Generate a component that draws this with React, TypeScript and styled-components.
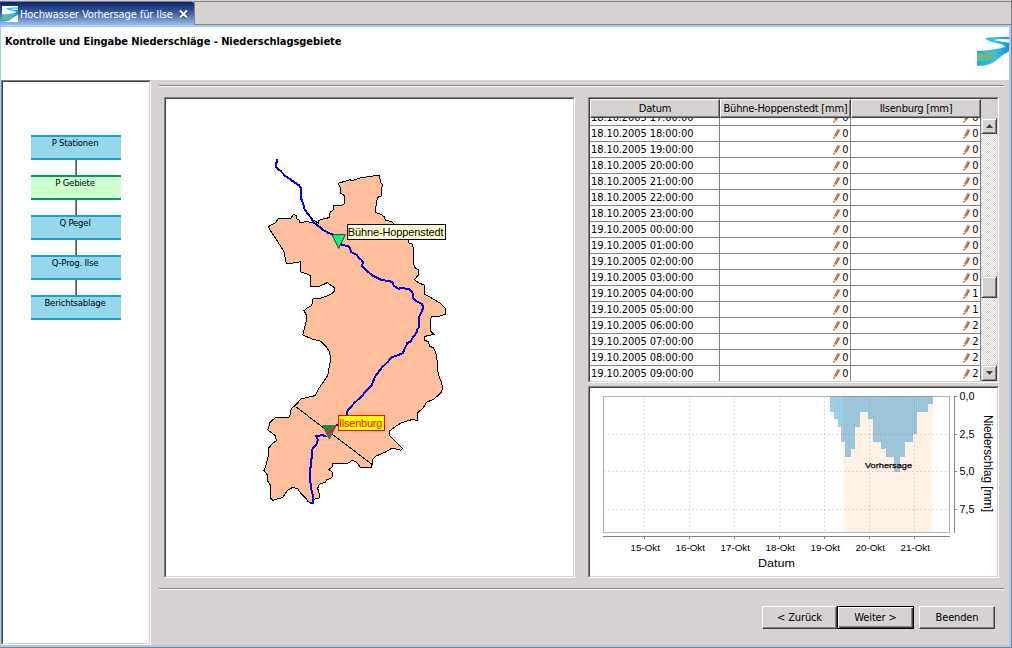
import React from 'react';
import styled, { createGlobalStyle } from 'styled-components';

const face = '#d6d3ce';
const shadow = '#848284';
const dark = '#424142';
const uiFont = '"DejaVu Sans Condensed", "DejaVu Sans", sans-serif';
const chartFont = '"Liberation Sans", Arial, sans-serif';

const GlobalStyle = createGlobalStyle`
  * { box-sizing: border-box; }
  body {
    margin: 0;
    background: ${face};
    font-family: ${uiFont};
    font-stretch: condensed;
    font-size: 11px;
    color: #000;
    overflow: hidden;
  }
`;

const Window = styled.div`
  width: 1012px;
  height: 648px;
  display: flex;
  flex-direction: column;
  border-right: 1px solid ${shadow};
  border-bottom: 1px solid ${shadow};
  background: ${face};
`;

const TabBar = styled.div`
  height: 25px;
  display: flex;
  flex: none;
  padding-top: 1px;
`;

const Tab = styled.div`
  width: 194px;
  height: 24px;
  display: flex;
  align-items: center;
  padding: 0 0 0 2px;
  color: #fff;
  border-top: 1px solid ${shadow};
  border-radius: 0 3px 0 0;
  background: linear-gradient(#0a246a, #3a5a9e 45%, #9abdee);
`;

const TabTitle = styled.span`
  width: 160px;
  padding: 2px 0 0 2px;
  white-space: nowrap;
  letter-spacing: -0.1px;
`;

const TabRest = styled.div`
  flex: 1;
  border: solid ${shadow};
  border-width: 1px 0 1px 1px;
`;

const Frame = styled.div`
  flex: 1;
  display: flex;
  flex-direction: column;
  border: solid #a5cbf7;
  border-width: 2px 2px 2px 1px;
`;

const Header = styled.header`
  height: 53px;
  flex: none;
  display: flex;
  justify-content: space-between;
  background: #fff;
`;

const Title = styled.h1`
  margin: 8px 0 0 4px;
  font-size: 11px;
  line-height: 14px;
  font-weight: bold;
  white-space: nowrap;
  letter-spacing: -0.055px;
`;

const HeaderLogo = styled.div`
  width: 32px;
  padding-top: 7px;
`;

const Body = styled.div`
  flex: 1;
  display: flex;
`;

const Sunken = styled.div`
  background: #fff;
  border: 1px solid;
  border-color: ${shadow} #fff #fff ${shadow};
  > * {
    border: 1px solid;
    border-color: ${dark} ${face} ${face} ${dark};
    height: 100%;
  }
`;

const SidePanel = styled(Sunken)`
  width: 150px;
  height: 565px;
`;

const Steps = styled.nav`
  display: flex;
  flex-direction: column;
  padding: 53px 0 0 28px;
`;

const Step = styled.div<{ $active?: boolean }>`
  width: 90px;
  height: 25px;
  text-align: center;
  font-size: 9.5px;
  line-height: 12px;
  letter-spacing: -0.2px;
  padding-right: 2px;
  border: solid ${p => (p.$active ? '#009a6b' : '#18a2ce')};
  border-width: 2px 0;
  background: ${p => (p.$active ? '#ceffce' : '#94d7ef')};
`;

const Connector = styled.div`
  width: 2px;
  height: 15px;
  margin-left: 44px;
  background: ${shadow};
  border-right: 1px solid #636163;
`;

const Main = styled.main`
  flex: 1;
  display: flex;
  flex-direction: column;
  padding: 5px 5px 0 8px;
`;

const Rule = styled.div`
  height: 2px;
  background: #fff;
  border-top: 1px solid ${shadow};
`;

const Content = styled.div`
  display: flex;
  height: 481px;
  gap: 13px;
  margin: 10px 0 10px 5px;
`;

const MapPanel = styled(Sunken)`
  width: 411px;
`;

const DataColumn = styled.div`
  width: 411px;
  display: flex;
  flex-direction: column;
  gap: 3px;
`;

const TablePanel = styled(Sunken)`
  height: 286px;
`;

const ChartPanel = styled(Sunken)`
  height: 192px;
`;

const TableLayout = styled.div`
  display: flex;
`;

const Grid = styled.div`
  width: 391px;
  display: flex;
  flex-direction: column;
`;

const columns = '130px 131px 130px';

const HeadRow = styled.div`
  display: grid;
  grid-template-columns: ${columns};
  height: 19px;
  flex: none;
`;

const HeadCell = styled.div`
  background: ${face};
  border: 1px solid;
  border-color: #fff ${dark} ${dark} #fff;
  box-shadow: inset -1px -1px ${shadow};
  text-align: center;
  line-height: 17px;
  letter-spacing: -0.24px;
  white-space: nowrap;
`;

const Rows = styled.div`
  height: 263px;
  overflow: hidden;
  display: flex;
  flex-direction: column;
  justify-content: flex-end;
`;

const Row = styled.div<{ $last?: boolean }>`
  display: grid;
  grid-template-columns: ${columns};
  height: ${p => (p.$last ? 15 : 16)}px;
  flex: none;
  border-bottom: ${p => (p.$last ? 0 : 1)}px solid ${shadow};
`;

const Cell = styled.div<{ $value?: boolean }>`
  display: flex;
  justify-content: ${p => (p.$value ? 'flex-end' : 'flex-start')};
  align-items: center;
  gap: 2.5px;
  padding: 0 ${p => (p.$value ? 1.5 : 1)}px;
  line-height: 15px;
  letter-spacing: ${p => (p.$value ? 0 : '-0.1px')};
  border-right: 1px solid ${shadow};
`;

const ScrollColumn = styled.div`
  width: 16px;
  display: flex;
  flex-direction: column;
  padding-top: 19px;
  background: linear-gradient(${face} 19px, transparent 19px),
    repeating-conic-gradient(#fff 0 25%, ${face} 0 50%) 0 0 / 2px 2px;
`;

const ScrollPart = styled.div<{ $height: number; $offset?: number }>`
  height: ${p => p.$height}px;
  margin-top: ${p => p.$offset ?? 0}px;
  display: flex;
  align-items: center;
  justify-content: center;
  background: ${face};
  border: 1px solid;
  border-color: ${face} ${dark} ${dark} ${face};
  box-shadow: inset 1px 1px #fff, inset -1px -1px ${shadow};
`;

const Footer = styled.footer`
  display: flex;
  justify-content: flex-end;
  padding: 16px 9px 0 0;
`;

const Button = styled.button<{ $default?: boolean; $width: number; $gap?: number }>`
  width: ${p => p.$width}px;
  height: 23px;
  margin: 0 0 0 ${p => p.$gap ?? 0}px;
  padding: 0 0 1px;
  font: inherit;
  letter-spacing: -0.15px;
  color: #000;
  background: ${face};
  border: 1px solid;
  border-color: ${p => (p.$default ? '#000' : `#fff ${dark} ${dark} #fff`)};
  box-shadow: ${p =>
    p.$default
      ? `inset 1px 1px #fff, inset -1px -1px ${dark}, inset -2px -2px ${shadow}`
      : `inset -1px -1px ${shadow}`};
`;

const Drawing = styled.svg`
  display: block;
  flex: none;
`;

function Logo({ width, height }: { width: number; height: number }) {
  return (
    <Drawing width={width} height={height} viewBox="0 0 96 96" preserveAspectRatio="none">
      <defs>
        <linearGradient id="water" x1="0" x2="1">
          <stop offset="0" stopColor="#10b2e7" />
          <stop offset=".55" stopColor="#39bff0" />
          <stop offset="1" stopColor="#1095d6" />
        </linearGradient>
      </defs>
      <rect width="96" height="96" fill="#fff" />
      <path fill="url(#water)" d="M24 13 Q38 8 96 9 V16 Q65 14 50 18 Q68 23 96 26 V52 Q74 63 56 80 Q40 94 14 95 L0 95 V51 Q56 48 83 39 Q87 34 70 30 Q34 24 24 13Z" />
      <path fill="#6bba84" d="M0 60 Q28 52 48 56 Q64 61 49 73 Q30 83 0 82Z" />
    </Drawing>
  );
}

function Pencil() {
  return (
    <Drawing width="7" height="10" viewBox="0 0 7 10">
      <path d="M4.3 .3 L6.9 1 L3.3 7.6 L.8 9.6 L.9 6.4Z" fill="#d68a42" />
      <path d="M6.5 1.2 L3.1 7.6" stroke="#84552e" strokeWidth="1" />
      <path d="M.8 6.3 L3 7.6 L.8 9.4Z" fill="#e7cba5" />
      <path d="M.4 8.4h1.1v1.2H.4Z" fill="#222" />
      <path d="M4.4 .2 L6.8 .7 L6.3 1.6 L4 1Z" fill="#a09084" />
    </Drawing>
  );
}

const basin =
  'M40 245 L62 233 L70 221 L108 219 L115 208 L124 211 L126 222 L133 226 L135 234 L155 229 L170 233 L177 227 L190 234 L192 226 L205 222 L222 218 L226 201 L235 195 L234 183 L258 181 L268 176 L267 151 L258 145 L257 130 L250 115 L285 104 L290 107 L318 98 L355 93 L374 91 L376 111 L382 119 L378 153 L368 157 L364 174 L361 202 L380 209 L388 216 L392 227 L410 229 L418 238 L440 246 L452 260 L460 280 L461 294 L473 298 L476 322 L475 354 L481 370 L491 374 L490 390 L478 404 L490 413 L507 420 L510 448 L538 464 L555 474 L571 490 L572 507 L548 515 L529 515 L526 530 L528 560 L538 568 L510 574 L508 585 L521 591 L523 604 L536 608 L545 633 L549 680 L553 697 L559 711 L563 730 L559 742 L535 764 L515 771 L503 791 L489 802 L487 826 L470 824 L440 833 L425 842 L404 858 L403 870 L420 888 L442 910 L438 916 L412 909 L390 922 L361 934 L354 943 L350 966 L317 968 L306 953 L292 946 L280 954 L234 954 L231 967 L220 974 L231 980 L232 994 L226 1001 L216 1003 L211 1012 L193 1018 L188 1030 L193 1046 L193 1059 L180 1062 L168 1076 L158 1068 L151 1058 L138 1046 L128 1031 L113 1027 L98 1036 L82 1058 L67 1062 L54 1066 L48 1060 L46 1020 L37 1007 L38 991 L27 976 L34 958 L40 932 L40 910 L53 895 L64 887 L61 872 L38 855 L45 832 L61 818 L104 816 L109 791 L122 780 L138 762 L180 752 L193 728 L218 692 L222 668 L227 644 L224 622 L214 605 L198 589 L172 582 L143 570 L156 520 L155 512 L147 497 L157 489 L170 482 L174 461 L198 459 L216 453 L230 446 L239 437 L237 427 L217 413 L191 425 L167 425 L168 394 L159 388 L138 381 L137 350 L114 354 L94 357 L90 335 L88 322 L77 304 L62 280 L47 258 Z';

const riverUpper =
  'M66 42 V50 L62 54 V67 L76 77 L90 92 L105 103 L132 121 L137 128 V157 L145 176 L148 191 L160 209 L170 220 L175 232 L190 243 L205 255 L220 264 L234 269 L248 284 L260 300 L279 303 L286 310 L287 321 L306 330 L311 338 L319 344 L323 351 L322 365 L335 377 L352 391 L380 405 L405 409 L413 412 L416 422 L430 431 L444 429 L463 433 L472 440 L476 463 L488 471 L501 477 L505 488 L498 505 L492 515 V547 L487 553 V560 L473 578 L467 589 L457 594 L443 625 L408 638 L400 649 L380 668 L359 697 L350 722 L330 741 L322 752 L300 772 L278 796 L275 816 L258 835 L243 841';

const riverLower =
  'M215 875 L202 870 L184 874 L188 883 L187 894 L171 914 L169 950 L164 985 L168 1030 L173 1048 L173 1073 L166 1074';

function BasinMap() {
  return (
    <Drawing viewBox="-267 -138 1221 1431" fontFamily={chartFont}>
      <path d={basin} fill="#ffbe9c" stroke="#000" strokeWidth="3" shapeRendering="crispEdges" />
      <path d="M122 785 L351 958" stroke="#000" strokeWidth="3" shapeRendering="crispEdges" />
      <path d={`${riverUpper} ${riverLower}`} fill="none" stroke="#0000d6" strokeWidth="6" shapeRendering="crispEdges" />
      <path d="M231 269 H271 L251 310Z" fill="#00ff84" stroke="#303030" strokeWidth="3" />
      <path d="M203 842 H243 L223 882Z" fill="#00a621" stroke="#285c70" strokeWidth="3" />
      <path d="M213 850 L232 864 M214 863 H223 L240 847" fill="none" stroke="#ff1038" strokeWidth="5" />
      <rect x="277" y="239" width="295" height="44" fill="#ffffce" stroke="#000" strokeWidth="3" shapeRendering="crispEdges" />
      <text x="278" y="273" fontSize="33" textLength="288">Bühne-Hoppenstedt</text>
      <rect x="250" y="812" width="138" height="44" fill="#ff0" stroke="#f00" strokeWidth="3" shapeRendering="crispEdges" />
      <text x="252" y="846" fontSize="33" fill="#f00" textLength="130">Ilsenburg</text>
    </Drawing>
  );
}

/* [start, end, depth] of every block of rainfall, in chart pixels */
const rainfall: [number, number, number][] = [
  [830, 834, 15.5], [834, 838, 23], [838, 841, 30.5], [841, 845, 45.5],
  [845, 851, 60.5], [851, 855, 53], [855, 860, 30.5], [860, 868, 15.5],
  [868, 873, 23], [873, 881, 45.5], [881, 885, 53], [885, 886, 51.5], [886, 894, 60.5],
  [894, 900, 75.5], [900, 905, 60.5], [905, 913, 45.5], [913, 917, 38],
  [917, 928, 15.5], [928, 933, 8],
];
const forecastStart = 843;
const days = [15, 16, 17, 18, 19, 20, 21];
const levels: [string, number][] = [['0,0', 396.5], ['2,5', 434.5], ['5,0', 471.5], ['7,5', 509.5]];

function RainChart() {
  return (
    <Drawing viewBox="590 388 407 188" fontFamily={chartFont}>
      <defs>
        <pattern id="hours" width="1.875" height="10" patternUnits="userSpaceOnUse">
          <rect width="1.875" height="10" fill="#94cbe9" />
          <rect width=".6" height="10" fill="#a8d6ef" />
        </pattern>
        <pattern id="forecastHours" width="1.875" height="10" patternUnits="userSpaceOnUse">
          <rect width="1.875" height="10" fill="#96c2d8" />
          <rect width=".6" height="10" fill="#a8cddc" />
        </pattern>
        <clipPath id="forecast">
          <rect x={forecastStart} y="396" width="90" height="137" />
        </clipPath>
      </defs>
      <rect x={forecastStart} y="397" width="90" height="135" fill="#fff1e6" />
      {rainfall.map(([a, b, h]) => (
        <rect key={a} x={a} y="396" width={b - a} height={h} fill="url(#hours)" shapeRendering="crispEdges" />
      ))}
      <g clipPath="url(#forecast)">
        {rainfall.map(([a, b, h]) => (
          <rect key={a} x={a} y="396" width={b - a} height={h} fill="url(#forecastHours)" shapeRendering="crispEdges" />
        ))}
      </g>
      {days.map((d, i) => (
        <path key={d} d={`M${644.5 + i * 45} 397V532`} stroke="#847070" strokeOpacity=".24" strokeDasharray="2 2" />
      ))}
      {levels.slice(1).map(([l, y]) => (
        <path key={l} d={`M604 ${y}H949`} stroke="#847070" strokeOpacity=".24" strokeDasharray="2 2" />
      ))}
      <rect x="603.5" y="396.5" width="346" height="136" fill="none" stroke="#848284" strokeOpacity=".6" />
      <path d="M603 536.5H950 M954.5 396V533" stroke="#848284" />
      {days.map((d, i) => (
        <g key={d}>
          <path d={`M${644.5 + i * 45} 537v2`} stroke="#848284" />
          <text x={630.5 + i * 45} y="551" fontSize="9.5" textLength="29.5" lengthAdjust="spacingAndGlyphs">{`${d}-Okt`}</text>
        </g>
      ))}
      {levels.map(([l, y]) => (
        <g key={l}>
          <path d={`M955 ${y}h2`} stroke="#848284" />
          <text x="959.5" y={y + 3.5} fontSize="10" textLength="15" lengthAdjust="spacingAndGlyphs">{l}</text>
        </g>
      ))}
      <text x="758" y="567" fontSize="11.5" textLength="37" lengthAdjust="spacingAndGlyphs">Datum</text>
      <text transform="translate(983.5 415) rotate(90)" fontSize="12" textLength="97" lengthAdjust="spacingAndGlyphs">Niederschlag [mm]</text>
      <text x="865" y="468" fontSize="8" stroke="#000" strokeWidth=".25" textLength="47" lengthAdjust="spacingAndGlyphs">Vorhersage</text>
    </Drawing>
  );
}

function CloseIcon() {
  return (
    <Drawing width="11" height="10" viewBox="0 0 11 10">
      <path d="M2 1.5 L9 8.5 M9 1.5 L2 8.5" stroke="#303850" strokeWidth="4" />
      <path d="M2 1.5 L9 8.5 M9 1.5 L2 8.5" stroke="#fff" strokeWidth="2.2" />
    </Drawing>
  );
}

function Arrow({ down }: { down?: boolean }) {
  return (
    <Drawing width="7" height="4" viewBox="0 0 7 4">
      <path d={down ? 'M0 0H7L3.5 4Z' : 'M0 4H7L3.5 0Z'} fill={dark} />
    </Drawing>
  );
}

const hourly: [string, number, number][] = [
  ['18.10.2005 17:00:00', 0, 0],
  ['18.10.2005 18:00:00', 0, 0],
  ['18.10.2005 19:00:00', 0, 0],
  ['18.10.2005 20:00:00', 0, 0],
  ['18.10.2005 21:00:00', 0, 0],
  ['18.10.2005 22:00:00', 0, 0],
  ['18.10.2005 23:00:00', 0, 0],
  ['19.10.2005 00:00:00', 0, 0],
  ['19.10.2005 01:00:00', 0, 0],
  ['19.10.2005 02:00:00', 0, 0],
  ['19.10.2005 03:00:00', 0, 0],
  ['19.10.2005 04:00:00', 0, 1],
  ['19.10.2005 05:00:00', 0, 1],
  ['19.10.2005 06:00:00', 0, 2],
  ['19.10.2005 07:00:00', 0, 2],
  ['19.10.2005 08:00:00', 0, 2],
  ['19.10.2005 09:00:00', 0, 2],
];

const steps = ['P Stationen', 'P Gebiete', 'Q Pegel', 'Q-Prog. Ilse', 'Berichtsablage'];

export default function App() {
  return (
    <>
      <GlobalStyle />
      <Window>
        <TabBar>
          <Tab>
            <Logo width={16} height={16} />
            <TabTitle>Hochwasser Vorhersage für Ilse</TabTitle>
            <CloseIcon />
          </Tab>
          <TabRest />
        </TabBar>
        <Frame>
          <Header>
            <Title>Kontrolle und Eingabe Niederschläge - Niederschlagsgebiete</Title>
            <HeaderLogo>
              <Logo width={32} height={32} />
            </HeaderLogo>
          </Header>
          <Body>
            <SidePanel>
              <Steps>
                {steps.map((s, i) => (
                  <React.Fragment key={s}>
                    {i > 0 && <Connector />}
                    <Step $active={i === 1}>{s}</Step>
                  </React.Fragment>
                ))}
              </Steps>
            </SidePanel>
            <Main>
              <Rule />
              <Content>
                <MapPanel>
                  <div>
                    <BasinMap />
                  </div>
                </MapPanel>
                <DataColumn>
                  <TablePanel>
                    <TableLayout>
                      <Grid>
                        <HeadRow>
                          <HeadCell>Datum</HeadCell>
                          <HeadCell>Bühne-Hoppenstedt [mm]</HeadCell>
                          <HeadCell>Ilsenburg [mm]</HeadCell>
                        </HeadRow>
                        <Rows>
                          {hourly.map(([time, a, b], i) => (
                            <Row key={time} $last={i === hourly.length - 1}>
                              <Cell>{time}</Cell>
                              <Cell $value><Pencil />{a}</Cell>
                              <Cell $value><Pencil />{b}</Cell>
                            </Row>
                          ))}
                        </Rows>
                      </Grid>
                      <ScrollColumn>
                        <ScrollPart $height={16}><Arrow /></ScrollPart>
                        <ScrollPart $height={22} $offset={142} />
                        <ScrollPart $height={16} $offset={67}><Arrow down /></ScrollPart>
                      </ScrollColumn>
                    </TableLayout>
                  </TablePanel>
                  <ChartPanel>
                    <div>
                      <RainChart />
                    </div>
                  </ChartPanel>
                </DataColumn>
              </Content>
              <Rule />
              <Footer>
                <Button $width={75}>&lt; Zurück</Button>
                <Button $width={77} $default>Weiter &gt;</Button>
                <Button $width={76} $gap={5}>Beenden</Button>
              </Footer>
            </Main>
          </Body>
        </Frame>
      </Window>
    </>
  );
}
